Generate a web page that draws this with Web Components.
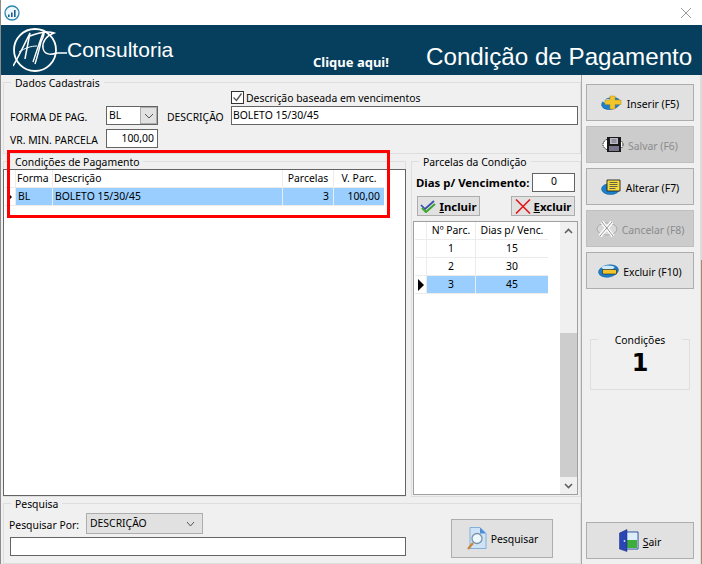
<!DOCTYPE html>
<html lang="pt">
<head>
<meta charset="utf-8">
<title>Condição de Pagamento</title>
<style>
  html, body { margin: 0; padding: 0; background: #f0f0f0; }
  body { overflow: hidden; }
</style>
</head>
<body>
<template id="ico-plus"><svg viewBox="0 0 22 15" width="22" height="15"><ellipse cx="10" cy="8.5" rx="9.5" ry="5.8" transform="rotate(-12 10 8.5)" fill="#1c7fc9" stroke="#14629f" stroke-width=".6"/><ellipse cx="7" cy="6" rx="5" ry="2" fill="#cfeafb"/><path d="M9 1h5v4h6v4.500h-6V14H9V9.500H4V5h5z" fill="#f4c52a" stroke="#b98f12" stroke-width=".5"/></svg></template>
<template id="ico-disk"><svg viewBox="0 0 22 17" width="22" height="17"><ellipse cx="11" cy="8.500" rx="10" ry="6.500" fill="#fff" stroke="#111" stroke-width=".9" stroke-dasharray="1.600 .8"/><path d="M5 1h14v15H5z" fill="#1a1a1a"/><path d="M8 2h8v6H8z" fill="#bdbacb"/><path d="M7 10h10v5H7z" fill="#77748c"/><path d="M9.500 4h5M9.500 6h5" stroke="#555" stroke-width=".8"/></svg></template>
<template id="ico-edit"><svg viewBox="0 0 21 16" width="21" height="16"><ellipse cx="9.500" cy="10" rx="9" ry="5.500" fill="#1c7fc9" stroke="#14629f" stroke-width=".6"/><path d="M6 1h13v11H6z" fill="#f6dc3c" stroke="#222" stroke-width=".9"/><path d="M8.500 3.500h8M8.500 5.500h8M8.500 7.500h8M8.500 9.500h6" stroke="#444" stroke-width=".8"/></svg></template>
<template id="ico-cancel"><svg viewBox="0 0 22 19" width="22" height="19"><ellipse cx="11" cy="10" rx="10" ry="6" fill="#d9d9d9" stroke="#9a9a9a" stroke-width=".7"/><path d="M4 17 16 3" stroke="#fff" stroke-width="3.600"/><path d="M6 3l11 14" stroke="#fff" stroke-width="3.600"/><path d="M4 17 16 3M6 3l11 14" stroke="#777" stroke-width=".8"/></svg></template>
<template id="ico-minus"><svg viewBox="0 0 21 15" width="21" height="15"><ellipse cx="10.500" cy="8" rx="10" ry="6" transform="rotate(-10 10.500 8)" fill="#1c7fc9" stroke="#14629f" stroke-width=".6"/><ellipse cx="10" cy="4.500" rx="6.500" ry="2" fill="#cfeafb"/><path d="M4.500 6.500h14v4.500h-14z" fill="#f4c52a" stroke="#222" stroke-width=".6"/></svg></template>
<template id="ico-check"><svg viewBox="0 0 16 13" width="16" height="13"><path d="M1 5l4 4L14 1" fill="none" stroke="#3a4db0" stroke-width="1.700"/><path d="M2 8l4 4 9-8" fill="none" stroke="#3da52e" stroke-width="2"/></svg></template>
<template id="ico-x"><svg viewBox="0 0 16 15" width="16" height="15"><path d="M1 .5l14 14M15 .5l-14 14" stroke="#e01818" stroke-width="1.600"/></svg></template>
<template id="ico-search"><svg viewBox="0 0 21 23" width="21" height="23"><path d="M4 .5h10l6 6v15H4z" fill="#cfe3f7" stroke="#86aeda"/><path d="M14 .5v6h6z" fill="#4d8fd6"/><circle cx="11" cy="11.500" r="5" fill="#eef8fd" stroke="#7a93a8" stroke-width="1.300"/><path d="M7 16l-5 6" stroke="#c8843a" stroke-width="2.200"/></svg></template>
<template id="ico-door"><svg viewBox="0 0 20 23" width="20" height="23"><path d="M6 3h13v17H6z" fill="#fff" stroke="#234a9c"/><path d="M8 11h10v8H8z" fill="#3dae3a"/><path d="M8 4h10v7H8z" fill="#dbeefa"/><path d="M.5 4 8 .5v22L.5 20z" fill="#2a45b4" stroke="#14297a" stroke-width=".5"/><circle cx="5.500" cy="12" r=".9" fill="#cfe0ff"/></svg></template>

<script>
const HEAD_FONT = '"Liberation Sans", Arial, sans-serif';
const UI_FONT = '"Noto Sans", "DejaVu Sans", sans-serif';

// Base class: each element just hands over its css and markup
class Box extends HTMLElement {
  constructor() {
    super();
    this.attachShadow({ mode: 'open' });
  }
  paint(html) { this.shadowRoot.innerHTML = html; }
}

class TitleBar extends Box {
  connectedCallback() {
    this.paint(`<style>
      :host { display: flex; align-items: center; justify-content: space-between; height: 25px; background: #fff; padding: 0 11px 0 3px; }
      svg { display: block; }
    </style>
    <svg width="16" height="16" viewBox="0 0 16 16"><circle cx="8" cy="8" r="7" fill="#eef8fc" stroke="#2a86b0" stroke-width="1.300"/><path d="M4 12V9.500h1.600V12zM7 12V7.500h1.600V12zM10 12V5h1.600v7z" fill="#1c5f8c"/></svg>
    <svg width="10" height="10" viewBox="0 0 10 10"><path d="M0 0l10 10M10 0 0 10" stroke="#9a9a9a" stroke-width="1"/></svg>`);
  }
}

class AppHeader extends Box {
  connectedCallback() {
    this.paint(`<style>
      :host { display: flex; height: 50px; background: #063f5e; color: #fff; font-family: ${HEAD_FONT}; }
      .logo { margin: 3px 0 0 12px; width: 54px; height: 45px; flex: none; }
      .brand { font-size: 21px; margin-top: 13px; width: 246px; flex: none; }
      .link { font: bold 13px ${UI_FONT}; margin-top: 28px; width: 113px; flex: none; }
      .title { font-size: 24.2px; margin-top: 18px; white-space: nowrap; }
    </style>
    <svg class="logo" viewBox="0 0 54 45" fill="none" stroke="#fff">
      <circle cx="22" cy="22" r="21" stroke-width="1.800"/>
      <path d="M0 38 C5 30 12 15 17 5 C15 15 13 25 12 31" stroke-width="1.500"/>
      <path d="M6 24 C12 20 18 18 24 18" stroke-width="1"/>
      <path d="M20 34 C24 22 28 10 30 5 C32 3 31 8 28 14 C26 22 24 30 22 36" stroke-width="1.400"/>
      <path d="M17 8 C25 5 35 3 41 5 C33 8 29 14 30 20 C31 27 38 27 44 25 H54" stroke-width="1.500"/>
    </svg>
    <div class="brand">Consultoria</div>
    <div class="link">Clique aqui!</div>
    <div class="title">Condição de Pagamento</div>`);
  }
}

class GroupBox extends Box {
  connectedCallback() {
    const center = this.hasAttribute('center');
    this.paint(`<style>
      :host { display: block; }
      fieldset { margin: 0; height: 100%; box-sizing: border-box; border: 1px solid #dedede; padding: 0; min-width: 0; }
      legend { padding: 2px 4px 0; margin-left: 7px; line-height: 11px; ${center ? 'margin: 0 auto; padding: 2px 17px 0;' : ''} }
    </style>
    <fieldset><legend>${this.getAttribute('label')}</legend><slot></slot></fieldset>`);
  }
}

class TextField extends Box {
  connectedCallback() {
    const align = this.getAttribute('align') || 'left';
    this.paint(`<style>
      :host { display: block; box-sizing: border-box; height: 19px; background: #fff; border: 1px solid #646464; line-height: 16px; padding: 0 3px 0 1px; text-align: ${align}; color: #000; white-space: nowrap; overflow: hidden; }
    </style><slot></slot>`);
  }
}

class ComboField extends Box {
  connectedCallback() {
    this.paint(`<style>
      :host { display: flex; box-sizing: border-box; height: 19px; background: #fff; border: 1px solid #646464; line-height: 17px; padding-left: 1px; }
      span { flex: 1; padding-left: 1px; }
      i { width: 17px; background: #e1e1e1; border: 1px solid #adadad; box-sizing: border-box; display: flex; align-items: center; justify-content: center; }
    </style><span><slot></slot></span><i><svg width="10" height="6" viewBox="0 0 10 6"><path d="M1 1l4 4 4-4" fill="none" stroke="#555"/></svg></i>`);
  }
}

class SelectField extends Box {
  connectedCallback() {
    this.paint(`<style>
      :host { display: flex; box-sizing: border-box; height: 21px; width: 117px; background: #e1e1e1; border: 1px solid #adadad; line-height: 15px; padding: 0 7px 0 3px; align-items: center; justify-content: space-between; }
    </style><span><slot></slot></span><svg width="9" height="6" viewBox="0 0 9 6"><path d="M1 1l3.500 4L8 1" fill="none" stroke="#555"/></svg>`);
  }
}

class ToolButton extends Box {
  connectedCallback() {
    const icon = document.getElementById(this.getAttribute('icon')).content.cloneNode(true);
    this.paint(`<style>
      :host { display: flex; box-sizing: border-box; height: 37px; align-items: center; justify-content: center; gap: 4px; background: #e1e1e1; border: 1px solid #adadad; color: #000; }
      :host([disabled]) { background: #cccccc; border-color: #bfbfbf; color: #8b8b8b; }
      svg { display: block; flex: none; }
      .t { padding-top: var(--text-shift, 2px); }
    </style><span class="t"><slot></slot></span>`);
    this.shadowRoot.prepend(icon);
  }
}

class SmallButton extends Box {
  connectedCallback() {
    const icon = document.getElementById(this.getAttribute('icon')).content.cloneNode(true);
    this.paint(`<style>
      :host { display: flex; box-sizing: border-box; height: 20px; align-items: center; justify-content: center; gap: 3px; background: #e1e1e1; border: 1px solid #adadad; font: bold 11.4px ${UI_FONT}; }
      svg { display: block; flex: none; }
    </style><slot></slot>`);
    this.shadowRoot.prepend(icon);
  }
}

class DataRow extends Box {
  connectedCallback() {
    const sel = this.hasAttribute('selected');
    const pad = this.hasAttribute('head') ? 1 : 2;
    this.paint(`<style>
      :host { display: grid; grid-template-columns: ${this.getAttribute('cols')}; column-gap: 1px; height: 18px; box-sizing: border-box; background: #ececec; width: max-content; border-bottom: 1px solid #ececec; }
      ::slotted(*) { display: block; line-height: 17px; padding: 0 ${pad}px; white-space: nowrap; overflow: hidden; background: ${sel ? '#99ceff' : '#fff'}; }
      ::slotted(.mark) { background: #fff; padding: 0; display: flex; align-items: center; justify-content: center; }
      ::slotted(.r) { text-align: right; padding-right: 4px; }
      ::slotted(.c) { text-align: center; }
    </style><slot></slot>`);
  }
}

class ScrollBar extends Box {
  connectedCallback() {
    this.paint(`<style>
      :host { display: flex; flex-direction: column; width: 17px; background: #f0f0f0; flex: none; }
      .btn { height: 17px; display: flex; align-items: center; justify-content: center; }
      .track { flex: 1; display: flex; flex-direction: column; }
      .thumb { margin-top: auto; height: 144px; background: #cdcdcd; }
    </style>
    <div class="btn"><svg width="9" height="6" viewBox="0 0 9 6"><path d="M1 5l3.500-3.500L8 5" fill="none" stroke="#606060" stroke-width="1.600"/></svg></div>
    <div class="track"><div class="thumb"></div></div>
    <div class="btn"><svg width="9" height="6" viewBox="0 0 9 6"><path d="M1 1l3.500 3.500L8 1" fill="none" stroke="#606060" stroke-width="1.600"/></svg></div>`);
  }
}

class AppWindow extends Box {
  connectedCallback() {
    this.paint(`<style>
      :host { display: flex; flex-direction: column; width: 702px; height: 564px; box-sizing: border-box; border-left: 1px solid #8c8c8c; background: #f0f0f0; font: 10.4px ${UI_FONT}; color: #000; position: relative; overflow: hidden; }
      .body { flex: 1; display: flex; min-height: 0; }
      .left { width: 580px; flex: none; border-right: 1px solid #a9a9a9; display: flex; flex-direction: column; }
      .right { flex: 1; display: flex; flex-direction: column; padding: 9px 6px 5px 4px; }
      .edge { width: 2px; flex: none; background: linear-gradient(180deg, #dcdcdc 0, #dcdcdc 185px, #a98a6c 185px); border-left: 1px solid #dcdcdc; box-sizing: border-box; }
      .buttons { display: flex; flex-direction: column; gap: 5px; }
      .counter { margin: 44px 4px 0 4px; height: 57px; }
      .count { font: bold 24px "DejaVu Sans", sans-serif; text-align: center; line-height: 30px; margin-top: 2px; }
      .exit { margin-top: auto; }

      .dados { margin: 1px 0 0 2px; height: 78px; flex: none; }
      .dados-inner { display: grid; grid-template-columns: 96px 52px 73px 347px; align-items: center; padding: 0 0 0 6px; row-gap: 4px; grid-template-rows: 19px 19px; white-space: nowrap; }
      .dados-inner > span { padding-top: 2px; }
      .check-row { display: flex; padding-left: 227px; height: 15px; margin-top: 2px; align-items: flex-start; line-height: 15px; }
      .box { width: 13px; height: 13px; border: 1px solid #333; background: #fff; display: flex; box-sizing: border-box; flex: none; }
      .desc-label { padding-left: 9px; }

      .mid { display: flex; height: 342px; padding: 1px 0 0 2px; gap: 5px; flex: none; }
      .cond { width: 403px; flex: none; }
      .parc { flex: 1; }
      .grid { box-sizing: border-box; border: 1px solid #646464; height: 327px; background: #fff; margin: 1px -1px 0 -1px; padding-left: 1px; }
      .mark-arrow { width: 0; height: 0; border-left: 4px solid #000; border-top: 4px solid transparent; border-bottom: 4px solid transparent; }
      .mark-arrow.big { border-left-width: 6px; border-top-width: 6px; border-bottom-width: 6px; }

      .parc-form { display: flex; align-items: center; padding: 0 0 0 4px; height: 19px; gap: 3px; font: bold 11.4px ${UI_FONT}; margin-top: 5px; }
      .parc-form text-field { width: 43px; font: 10.4px ${UI_FONT}; padding: 0; }
      .parc-btns { display: flex; gap: 31px; padding: 4px 0 0 5px; }
      .parc-btns small-button:first-child { width: 63px; }
      .parc-btns small-button:last-child { width: 64px; }
      .parc-grid { display: flex; box-sizing: border-box; margin: 5px 2px 0 1px; height: 274px; border: 1px solid #a0a0a0; background: #fff; padding: 0 0 0 1px; }
      .parc-rows { flex: 1; }

      .search { margin: 0 0 0 2px; flex: 1; min-height: 0; }
      .search-inner { display: grid; grid-template-columns: 402px 1fr; padding: 0 0 0 5px; }
      .search-row { display: flex; align-items: center; height: 21px; margin-top: 3px; }
      .search-row span { width: 77px; padding-top: 3px; }
      .search-inner text-field { margin: 3px 0 0 1px; width: 396px; }
      .search-btn { margin: 9px 0 0 40px; width: 102px; height: 39px; --text-shift: 0px; }
      .hl { position: absolute; left: 6px; top: 150px; width: 383px; height: 68px; border: 3px solid #ff0000; box-sizing: border-box; }
    </style>
    <title-bar></title-bar>
    <app-header></app-header>
    <div class="body">
      <div class="left">
        <group-box class="dados" label="Dados Cadastrais">
          <div class="check-row"><span class="box"><svg width="11" height="11" viewBox="0 0 11 11"><path d="M1.500 5.500l3 3 5-7" fill="none" stroke="#555" stroke-width="1.300"/></svg></span><span style="margin-left:2px">Descrição baseada em vencimentos</span></div>
          <div class="dados-inner">
            <span>FORMA DE PAG.</span><combo-field>BL</combo-field><span class="desc-label">DESCRIÇÃO</span><text-field>BOLETO 15/30/45</text-field>
            <span>VR. MIN. PARCELA</span><text-field align="right">100,00</text-field>
          </div>
        </group-box>
        <div class="mid">
          <group-box class="cond" label="Condições de Pagamento">
            <div class="grid">
              <data-row head cols="10px 36px 229px 50px 50px"><span class="mark"></span><span>Forma</span><span>Descrição</span><span class="c">Parcelas</span><span class="c">V. Parc.</span></data-row>
              <data-row selected cols="10px 36px 229px 50px 50px"><span class="mark"><i class="mark-arrow"></i></span><span>BL</span><span>BOLETO 15/30/45</span><span class="r">3</span><span class="r">100,00</span></data-row>
            </div>
          </group-box>
          <group-box class="parc" label="Parcelas da Condição">
            <div class="parc-form"><span>Dias p/ Vencimento:</span><text-field align="center">0</text-field></div>
            <div class="parc-btns"><small-button icon="ico-check"><span><u>I</u>ncluir</span></small-button><small-button icon="ico-x"><span><u>E</u>xcluir</span></small-button></div>
            <div class="parc-grid">
              <div class="parc-rows">
                <data-row head cols="11px 48px 72px"><span class="mark"></span><span class="c">Nº Parc.</span><span class="c">Dias p/ Venc.</span></data-row>
                <data-row cols="11px 48px 72px"><span class="mark"></span><span class="c">1</span><span class="c">15</span></data-row>
                <data-row cols="11px 48px 72px"><span class="mark"></span><span class="c">2</span><span class="c">30</span></data-row>
                <data-row selected cols="11px 48px 72px"><span class="mark"><i class="mark-arrow big"></i></span><span class="c">3</span><span class="c">45</span></data-row>
              </div>
              <scroll-bar></scroll-bar>
            </div>
          </group-box>
        </div>
        <group-box class="search" label="Pesquisa">
          <div class="search-inner">
            <div>
              <div class="search-row"><span>Pesquisar Por:</span><select-field>DESCRIÇÃO</select-field></div>
              <text-field></text-field>
            </div>
            <tool-button class="search-btn" icon="ico-search">Pesquisar</tool-button>
          </div>
        </group-box>
      </div>
      <div class="right">
        <div class="buttons">
          <tool-button icon="ico-plus">Inserir (F5)</tool-button>
          <tool-button icon="ico-disk" disabled>Salvar (F6)</tool-button>
          <tool-button icon="ico-edit">Alterar (F7)</tool-button>
          <tool-button icon="ico-cancel" disabled>Cancelar (F8)</tool-button>
          <tool-button icon="ico-minus">Excluir (F10)</tool-button>
        </div>
        <group-box class="counter" label="Condições" center><div class="count">1</div></group-box>
        <tool-button class="exit" icon="ico-door"><span><u>S</u>air</span></tool-button>
      </div>
      <div class="edge"></div>
      <div class="hl"></div>
    </div>`);
  }
}

customElements.define('title-bar', TitleBar);
customElements.define('app-header', AppHeader);
customElements.define('group-box', GroupBox);
customElements.define('text-field', TextField);
customElements.define('combo-field', ComboField);
customElements.define('select-field', SelectField);
customElements.define('tool-button', ToolButton);
customElements.define('small-button', SmallButton);
customElements.define('data-row', DataRow);
customElements.define('scroll-bar', ScrollBar);
customElements.define('app-window', AppWindow);
</script>
<app-window></app-window>
</body>
</html>
